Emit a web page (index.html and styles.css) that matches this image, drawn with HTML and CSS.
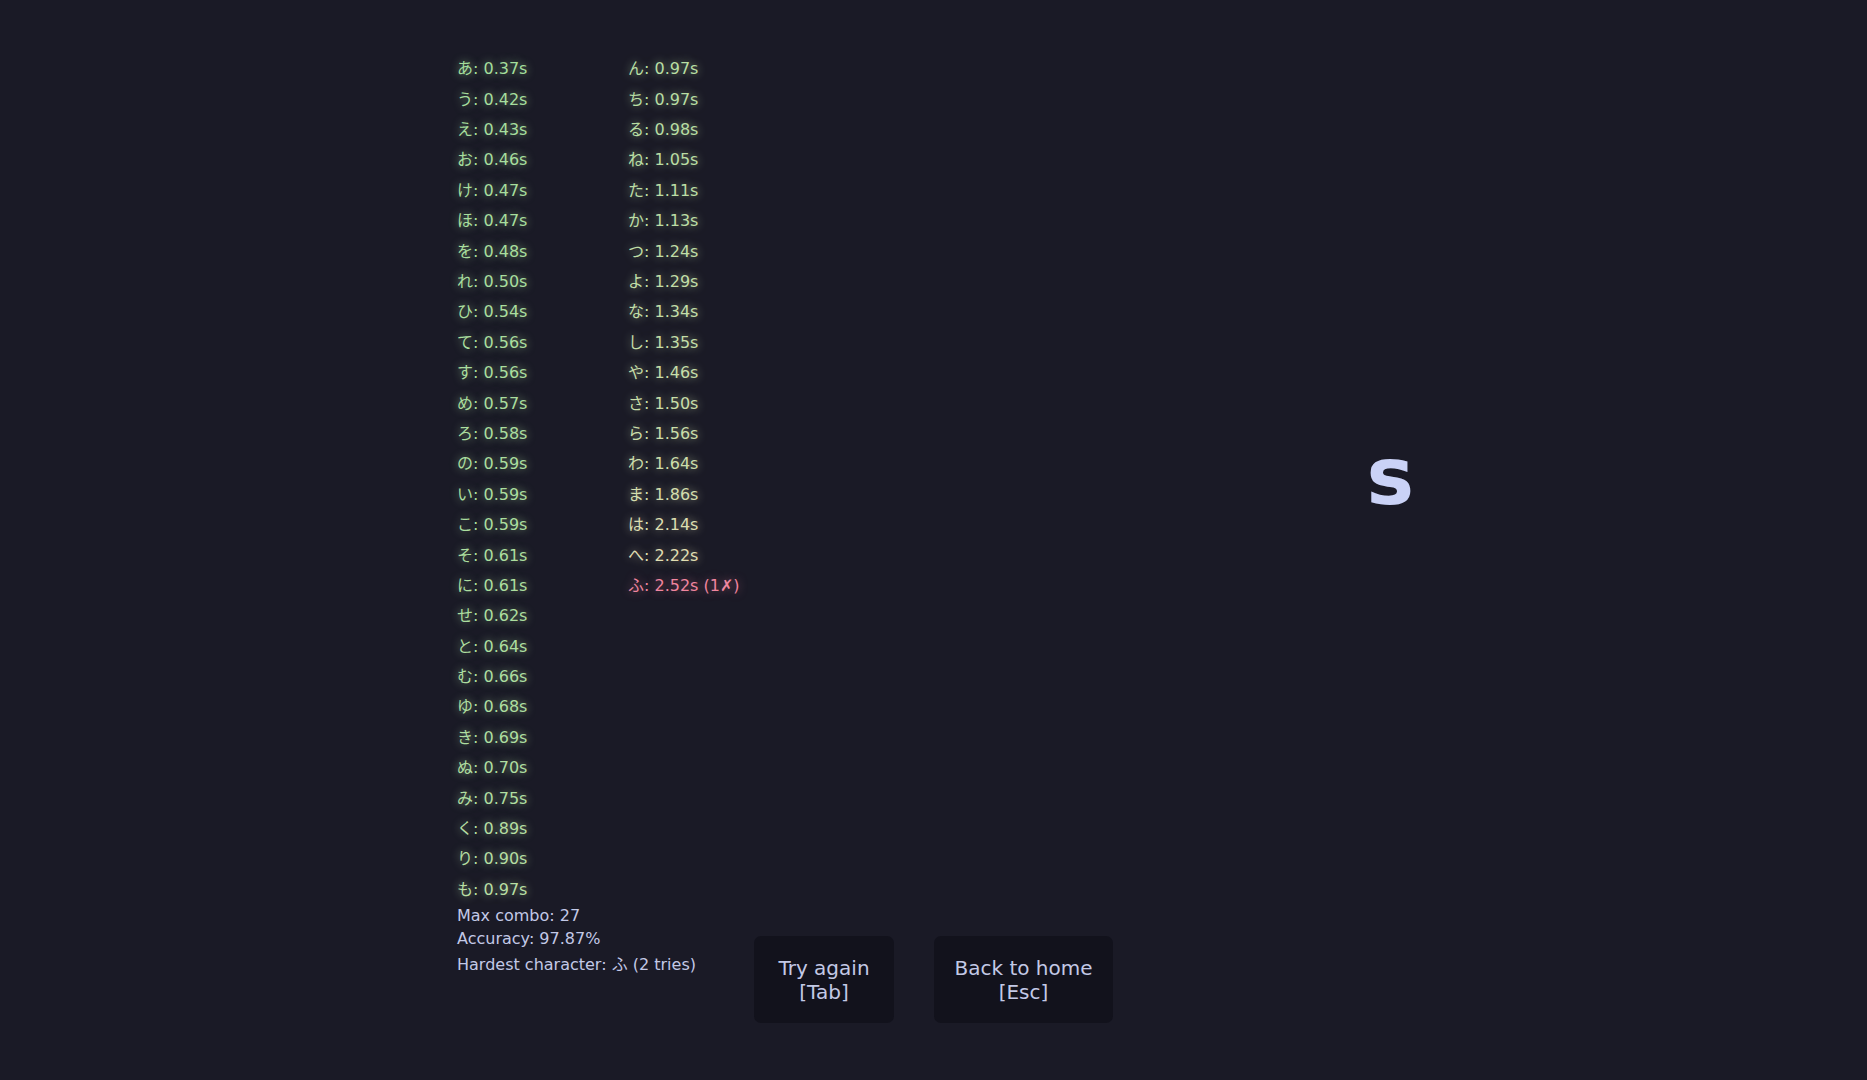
FILE: index.html
```html
<!DOCTYPE html>
<html lang="en">
<head>
<meta charset="utf-8">
<title>Results</title>
<link rel="stylesheet" href="styles.css">
</head>
<body>
<main class="screen">
  <section class="results">
    <ol class="times">
      <li style="--c:#a4de9c">あ: 0.37s</li>
      <li style="--c:#a6de9d">う: 0.42s</li>
      <li style="--c:#a6de9d">え: 0.43s</li>
      <li style="--c:#a7de9d">お: 0.46s</li>
      <li style="--c:#a7de9d">け: 0.47s</li>
      <li style="--c:#a7de9d">ほ: 0.47s</li>
      <li style="--c:#a8de9d">を: 0.48s</li>
      <li style="--c:#a8de9e">れ: 0.50s</li>
      <li style="--c:#aade9e">ひ: 0.54s</li>
      <li style="--c:#aade9e">て: 0.56s</li>
      <li style="--c:#aade9e">す: 0.56s</li>
      <li style="--c:#aade9e">め: 0.57s</li>
      <li style="--c:#abde9f">ろ: 0.58s</li>
      <li style="--c:#abde9f">の: 0.59s</li>
      <li style="--c:#abde9f">い: 0.59s</li>
      <li style="--c:#abde9f">こ: 0.59s</li>
      <li style="--c:#acde9f">そ: 0.61s</li>
      <li style="--c:#acde9f">に: 0.61s</li>
      <li style="--c:#acde9f">せ: 0.62s</li>
      <li style="--c:#adde9f">と: 0.64s</li>
      <li style="--c:#addea0">む: 0.66s</li>
      <li style="--c:#aedea0">ゆ: 0.68s</li>
      <li style="--c:#aedea0">き: 0.69s</li>
      <li style="--c:#afdea0">ぬ: 0.70s</li>
      <li style="--c:#b0dea1">み: 0.75s</li>
      <li style="--c:#b5dea2">く: 0.89s</li>
      <li style="--c:#b5dea2">り: 0.90s</li>
      <li style="--c:#b8dea3">も: 0.97s</li>
      <li style="--c:#b8dea3">ん: 0.97s</li>
      <li style="--c:#b8dea3">ち: 0.97s</li>
      <li style="--c:#b8dea3">る: 0.98s</li>
      <li style="--c:#badea4">ね: 1.05s</li>
      <li style="--c:#bcdea5">た: 1.11s</li>
      <li style="--c:#bddea5">か: 1.13s</li>
      <li style="--c:#c0dea6">つ: 1.24s</li>
      <li style="--c:#c2dea7">よ: 1.29s</li>
      <li style="--c:#c3dea8">な: 1.34s</li>
      <li style="--c:#c4dea8">し: 1.35s</li>
      <li style="--c:#c7dea9">や: 1.46s</li>
      <li style="--c:#c9dea9">さ: 1.50s</li>
      <li style="--c:#cbdeaa">ら: 1.56s</li>
      <li style="--c:#cddeab">わ: 1.64s</li>
      <li style="--c:#d4deae">ま: 1.86s</li>
      <li style="--c:#dddeb1">は: 2.14s</li>
      <li style="--c:#e0deb2">へ: 2.22s</li>
      <li class="missed">ふ: 2.52s (1✗)</li>
    </ol>
    <div class="footer">
      <div class="stats">
        <p class="stat">Max combo: 27</p>
        <p class="stat stat-acc">Accuracy: 97.87%</p>
        <p class="stat stat-hard">Hardest character: ふ (2 tries)</p>
      </div>
      <div class="actions">
        <button class="btn btn-retry"><span class="btn-line">Try again</span><span class="btn-line">[Tab]</span></button>
        <button class="btn btn-home"><span class="btn-line">Back to home</span><span class="btn-line">[Esc]</span></button>
      </div>
    </div>
  </section>
  <div class="current">s</div>
</main>
</body>
</html>
```
FILE: styles.css
```css
html, body {
  margin: 0;
  padding: 0;
}

body {
  background: #1a1a26;
  height: 1080px;
  overflow: hidden;
  font-family: "DejaVu Sans", "Noto Sans CJK JP", sans-serif;
  font-size: 16px;
  color: #c3c9e6;
}

.screen {
  display: flex;
  align-items: flex-start;
  width: 957px;
  margin-left: 457px;
  padding-top: 54.27px;
}

.results {
  display: flex;
  flex-direction: column;
}

.times {
  list-style: none;
  margin: 0;
  padding: 0;
  display: grid;
  grid-auto-flow: column;
  grid-template-rows: repeat(28, 30.4px);
  grid-template-columns: 171px max-content;
  line-height: 30.4px;
  font-size: 16px;
}

.times li {
  color: var(--c);
  text-shadow: 0 0 8px color-mix(in srgb, var(--c) 70%, transparent);
  white-space: nowrap;
}

.times li.missed {
  color: #f0859f;
  text-shadow: 0 0 8px rgba(240, 133, 159, 0.55);
}

.footer {
  display: flex;
  align-items: flex-start;
}

.stats {
  width: 297px;
  padding-top: 1.4px;
}

.stat {
  margin: 0;
  line-height: 18.63px;
  white-space: nowrap;
}

.stat-acc {
  margin-top: 4.65px;
}

.stat-hard {
  margin-top: 7.67px;
}

.actions {
  display: flex;
  gap: 40px;
  margin-top: 30.5px;
}

.btn {
  display: flex;
  flex-direction: column;
  align-items: center;
  justify-content: center;
  height: 87px;
  padding: 2px 0 0;
  border: none;
  border-radius: 7px;
  background: #12121c;
  color: #c3c9e6;
  font-family: "DejaVu Sans", sans-serif;
  font-size: 20px;
  line-height: 24px;
  text-align: center;
}

.btn-line {
  display: block;
  white-space: nowrap;
}

.btn-retry {
  width: 140px;
}

.btn-home {
  width: 179px;
}

.current {
  margin-left: auto;
  margin-top: 383px;
  font-family: "DejaVu Sans", sans-serif;
  font-weight: bold;
  font-size: 80px;
  line-height: 80px;
  color: #cad2f6;
}
```
